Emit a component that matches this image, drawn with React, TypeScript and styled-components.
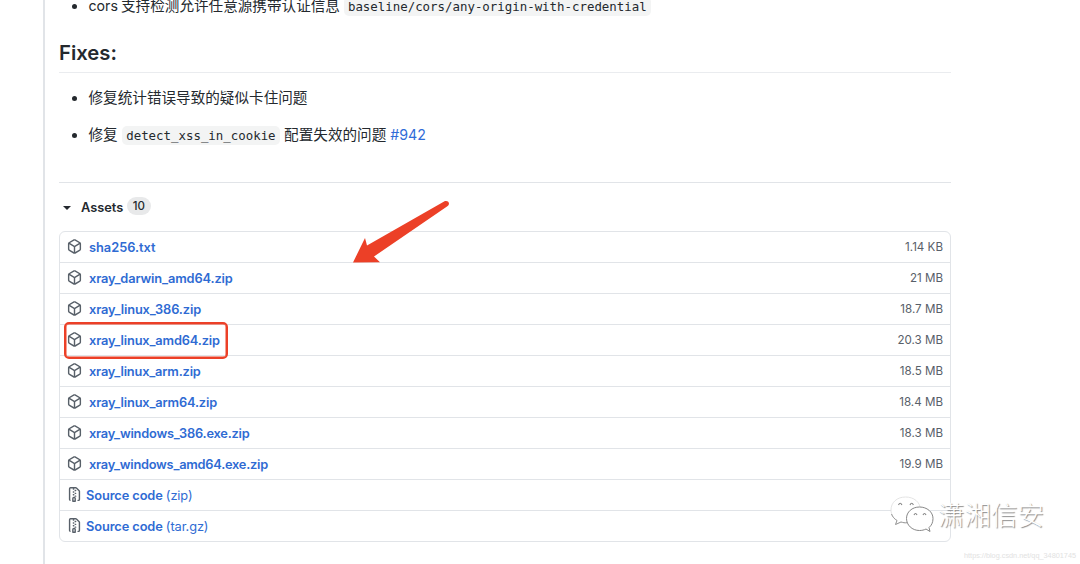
import React from 'react';
import styled, { createGlobalStyle } from 'styled-components';

const GlobalStyle = createGlobalStyle`
  * { box-sizing: border-box; }
  body {
    margin: 0;
    background: #fff;
    color: #24292e;
    font-family: Inter, "Noto Sans CJK SC", sans-serif;
    overflow: hidden;
  }
`;

const Page = styled.div`
  position: relative;
  width: 1080px;
  height: 564px;
  padding-left: 43px;
  overflow: hidden;
`;

const Release = styled.main`
  display: flow-root;
  height: 564px;
  width: 908px;
  padding-left: 14px;
  border-left: 2px solid #e1e4e8;
`;

const List = styled.ul`
  margin: 0;
  padding: 0;
  list-style: none;
`;

const Item = styled.li<{ $top?: number }>`
  display: flex;
  align-items: center;
  height: 22px;
  margin-top: ${(p) => p.$top ?? 0}px;
  padding-left: 13px;
  font-size: 14.6px;
  line-height: 22px;
  white-space: pre;
  &::before {
    content: '';
    width: 5px;
    height: 5px;
    margin-right: 11.5px;
    border-radius: 50%;
    background: #24292e;
  }
`;

const Latin = styled.span<{ $width: number }>`
  width: ${(p) => p.$width}px;
  font-size: 14.2px;
`;

const Code = styled.code<{ $left: number; $right?: number }>`
  height: 19px;
  margin-left: ${(p) => p.$left}px;
  margin-right: ${(p) => p.$right ?? 0}px;
  padding: 0 4px;
  border-radius: 5px;
  background: #f3f4f4;
  font: 12.42px/19px "DejaVu Sans Mono", monospace;
`;

const Heading = styled.h2`
  height: 37px;
  margin: 18.5px 0 0;
  border-bottom: 1px solid #eaecef;
  font-size: 20.3px;
  font-weight: 600;
  line-height: 34px;
`;

const IssueLink = styled.a`
  margin-left: 4px;
  color: #2f6bd8;
  font-size: 14.2px;
`;

const Summary = styled.div`
  display: flex;
  align-items: center;
  height: 49px;
  margin-top: 36px;
  border-top: 1px solid #e1e4e8;
  font-size: 12.8px;
  font-weight: 600;
`;

const Caret = styled.i`
  margin: 2px 10.5px 0 3.5px;
  border: 3.5px solid transparent;
  border-width: 4px 4px 0;
  border-top-color: #24292e;
`;

const Counter = styled.span`
  height: 18px;
  margin: -2px 0 0 3.5px;
  padding: 0 6px;
  border-radius: 9px;
  background: #e8e9ea;
  font-size: 11.5px;
  font-weight: 500;
  line-height: 18px;
`;

const AssetBox = styled.div`
  border: 1px solid #e1e4e8;
  border-radius: 6px;
`;

const AssetRow = styled.div`
  display: flex;
  align-items: center;
  height: 31px;
  padding: 0 7px;
  & + & { border-top: 1px solid #e1e4e8; }
  &:first-child { height: 30px; }
`;

const AssetName = styled.a<{ $left: number; $tracking?: number }>`
  margin-left: ${(p) => p.$left}px;
  color: #2f6bd3;
  font-size: 12.8px;
  font-weight: 600;
  letter-spacing: ${(p) => p.$tracking ?? 0}px;
  white-space: pre;
`;

const Kind = styled.span`
  font-weight: 400;
`;

const Size = styled.span`
  margin-left: auto;
  color: #586069;
  font-size: 11.6px;
`;

const Icon = styled.svg`
  flex: none;
  width: 15px;
  height: 15px;
  margin-top: -2px;
  fill: #586069;
`;

const Highlight = styled.div`
  position: absolute;
  left: 64px;
  top: 322px;
  width: 164px;
  height: 37px;
  border: 2px solid #ec4027;
  border-radius: 5px;
  box-shadow: inset 0 0 0 0.5px #ec4027;
`;

const Arrow = styled.svg`
  position: absolute;
  left: 340px;
  top: 190px;
`;

const Watermark = styled.div`
  position: absolute;
  left: 888px;
  top: 493px;
  display: flex;
  align-items: center;
  height: 42px;
  color: #fff;
  font: 300 26.5px/42px "Noto Sans CJK SC", sans-serif;
  text-shadow: 1px 1px 1px #888;
`;

const Url = styled.div`
  position: absolute;
  right: 4px;
  top: 550px;
  color: #e2e2e2;
  font: 7.3px/12px "Liberation Sans", sans-serif;
`;

const PACKAGE =
  'M8.878.392a1.75 1.75 0 00-1.756 0l-5.25 3.045A1.75 1.75 0 001 4.951v6.098c0 .624.332 1.2.872 1.514l5.25 3.045a1.75 1.75 0 001.756 0l5.25-3.045c.54-.313.872-.89.872-1.514V4.951c0-.624-.332-1.2-.872-1.514L8.878.392zM7.875 1.69a.25.25 0 01.25 0l4.63 2.685L8 7.133 3.245 4.375l4.63-2.685zM2.5 5.677v5.372c0 .09.047.171.125.216l4.625 2.683V8.432L2.5 5.677zm6.25 8.271l4.625-2.683a.25.25 0 00.125-.216V5.677L8.75 8.432v5.516z';
const ZIP =
  'M3.5 1.75a.25.25 0 01.25-.25h3a.75.75 0 000 1.5h.5a.75.75 0 000-1.5h2.086a.25.25 0 01.177.073l2.914 2.914a.25.25 0 01.073.177v8.586a.25.25 0 01-.25.25h-.5a.75.75 0 000 1.5h.5A1.75 1.75 0 0014 13.25V4.664c0-.464-.184-.909-.513-1.237L10.573.513A1.75 1.75 0 009.336 0H3.75A1.75 1.75 0 002 1.75v11.5c0 .649.353 1.214.874 1.515a.75.75 0 10.752-1.298.25.25 0 01-.126-.217V1.75zM8.75 3a.75.75 0 000 1.5h.5a.75.75 0 000-1.5h-.5zM6 5.25a.75.75 0 01.75-.75h.5a.75.75 0 010 1.5h-.5A.75.75 0 016 5.25zm2 1.5A.75.75 0 018.75 6h.5a.75.75 0 010 1.5h-.5A.75.75 0 018 6.75zm-1.25.75a.75.75 0 000 1.5h.5a.75.75 0 000-1.5h-.5zM8 9.75A.75.75 0 018.75 9h.5a.75.75 0 010 1.5h-.5A.75.75 0 018 9.75zm-.75.75a1.75 1.75 0 00-1.75 1.75v3c0 .414.336.75.75.75h2.5a.75.75 0 00.75-.75v-3a1.75 1.75 0 00-1.75-1.75h-.5zM7 12.25a.25.25 0 01.25-.25h.5a.25.25 0 01.25.25v2.25H7v-2.25z';

const assets = [
  { name: 'sha256.txt', size: '1.14 KB', tracking: 0 },
  { name: 'xray_darwin_amd64.zip', size: '21 MB', tracking: -0.12 },
  { name: 'xray_linux_386.zip', size: '18.7 MB', tracking: -0.12 },
  { name: 'xray_linux_amd64.zip', size: '20.3 MB', tracking: -0.15 },
  { name: 'xray_linux_arm.zip', size: '18.5 MB', tracking: -0.17 },
  { name: 'xray_linux_arm64.zip', size: '18.4 MB', tracking: -0.15 },
  { name: 'xray_windows_386.exe.zip', size: '18.3 MB', tracking: -0.2 },
  { name: 'xray_windows_amd64.exe.zip', size: '19.9 MB', tracking: -0.23 },
];

export default function App() {
  return (
    <Page>
      <GlobalStyle />
      <Release>
        <List>
          <Item $top={-5}>
            <Latin $width={32.5}>cors</Latin>支持检测允许任意源携带认证信息
            <Code $left={4}>baseline/cors/any-origin-with-credential</Code>
          </Item>
        </List>
        <Heading>Fixes:</Heading>
        <List>
          <Item $top={14.5}>修复统计错误导致的疑似卡住问题</Item>
          <Item $top={15}>
            修复<Code $left={4.5} $right={4.5}>detect_xss_in_cookie</Code>配置失效的问题
            <IssueLink>#942</IssueLink>
          </Item>
        </List>
        <Summary>
          <Caret />
          Assets
          <Counter>10</Counter>
        </Summary>
        <AssetBox>
          {assets.map(({ name, size, tracking }) => (
            <AssetRow key={name}>
              <Icon viewBox="0 0 16 16"><path fillRule="evenodd" d={PACKAGE} /></Icon>
              <AssetName $left={7} $tracking={tracking}>{name}</AssetName>
              <Size>{size}</Size>
            </AssetRow>
          ))}
          {['(zip)', '(tar.gz)'].map((kind) => (
            <AssetRow key={kind}>
              <Icon viewBox="0 0 16 16"><path fillRule="evenodd" d={ZIP} /></Icon>
              <AssetName $left={4} $tracking={-0.1}>Source code <Kind>{kind}</Kind></AssetName>
            </AssetRow>
          ))}
        </AssetBox>
      </Release>
      <Highlight />
      <Arrow width="120" height="80" viewBox="0 0 120 80">
        <path fill="#ec4027" d="M13 72.5 L25 48 L27 55.5 L105 11 Q109 10.5 109 14 Q108.500 15.500 107 16.500 L34 66.500 L40 72.300 Z" />
      </Arrow>
      <Watermark>
        <svg width="50" height="42" viewBox="0 0 50 42" fill="#fff" strokeWidth="0.8">
          <path stroke="#ddd" d="M17.500 4 C9 4 3 9.500 3 17 C3 21.500 5.500 25 9 27.500 L7.500 31.500 L13 29 C15 29.600 17 30 19 29.700 C28 29 33 24 32.500 16.500 C32 9 26 4 17.500 4Z" />
          <path fill="none" stroke="#999" strokeWidth="1" d="M3.500 21 C4.500 24 6.500 26 9 27.500 L7.500 31.500 L13 29 C15 29.600 17 30 19 29.700" />
          <path stroke="#888" strokeWidth="1" d="M31.500 14 C24 14 18.500 19 18.500 25.500 C18.500 32 24 37.500 31.500 37.500 C34 37.500 36 37 38 36 L42 38.500 L41 34.500 C43.500 32.500 45 29.500 45 25.500 C45 19 39 14 31.500 14Z" />
          <path fill="none" stroke="#888" strokeWidth="1.2" d="M10.500 12q1.700-3.500 3.400 0M22 12q1.700-3.500 3.400 0M26 22q1.500-3 3 0M35 22q1.500-3 3 0" />
        </svg>
        潇湘信安
      </Watermark>
      <Url>https://blog.csdn.net/qq_34801745</Url>
    </Page>
  );
}
